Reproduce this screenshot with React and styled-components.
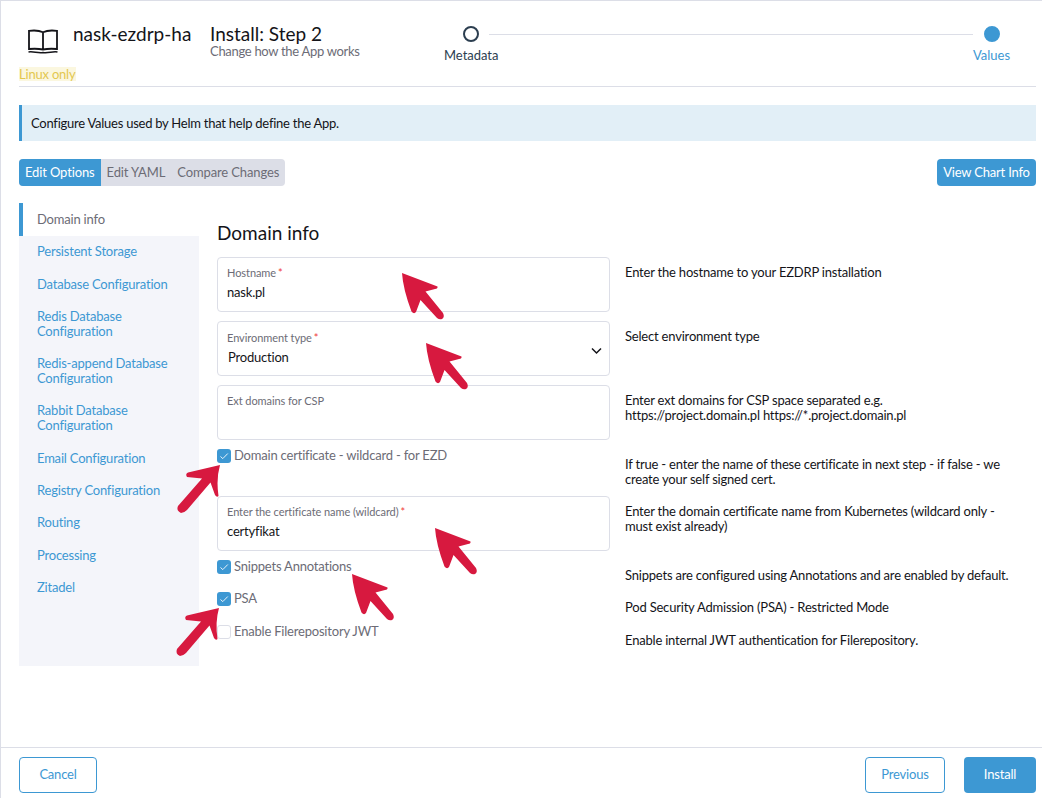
import React from 'react';
import styled, { createGlobalStyle } from 'styled-components';

const Global = createGlobalStyle`
  html, body { margin: 0; padding: 0; background: #fff; }
  body { font-family: Lato, "Open Sans", sans-serif; font-size: 13px; letter-spacing: -0.2px; line-height: 15px; color: #141419; }
  * { box-sizing: border-box; }
`;

const blue = '#3d98d3';
const line = '#dcdee7';
const muted = '#6c6c76';

const Page = styled.div`
  position: relative;
  width: 1042px;
  height: 798px;
  border-left: 1px solid ${line};
  border-top: 1px solid ${line};
  display: flex;
  flex-direction: column;
  overflow: hidden;
`;
const Main = styled.main`
  flex: 1;
  padding: 0 6px 0 18px;
  display: flex;
  flex-direction: column;
`;
const Header = styled.header`
  height: 86px;
  border-bottom: 1px solid ${line};
  display: flex;
  align-items: flex-start;
`;
const Brand = styled.div`
  width: 191px;
  display: flex;
  flex-direction: column;
`;
const BrandRow = styled.div`
  height: 66px;
  display: flex;
  align-items: flex-start;
  padding: 21px 0 0 8px;
  gap: 14px;
`;
const AppName = styled.div`
  font-size: 19px;
  letter-spacing: 0;
  line-height: 24px;
`;
const OsBadge = styled.span`
  align-self: flex-start;
  font-size: 13px;
  line-height: 14px;
  color: #e3c74f;
  background: #fbf7df;
`;
const TitleBlock = styled.div`
  width: 234px;
  padding-top: 21px;
`;
const Title = styled.div`
  font-size: 19px;
  letter-spacing: 0;
  line-height: 24px;
`;
const Subtitle = styled.div`
  font-size: 13px;
  letter-spacing: -0.3px;
  line-height: 14px;
  margin-top: -2px;
  color: ${muted};
`;
const Stepper = styled.div`
  flex: 1;
  margin-right: 26px;
  padding-top: 25px;
  display: flex;
  align-items: flex-start;
`;
const Step = styled.div`
  display: flex;
  flex-direction: column;
  align-items: center;
  gap: 6px;
  font-size: 13px;
  letter-spacing: -0.02px;
  line-height: 15px;
  color: ${p => (p.$active ? blue : '#2c3e50')};
`;
const Dot = styled.span`
  width: 16px;
  height: 16px;
  border-radius: 50%;
  border: 2px solid ${p => (p.$active ? blue : '#2c3e50')};
  background: ${p => (p.$active ? blue : '#fff')};
`;
const StepLine = styled.div`
  flex: 1;
  height: 1px;
  background: ${line};
  margin: 8px 0 0 -9px;
`;
const Banner = styled.div`
  margin-top: 18px;
  height: 36px;
  background: #e2eff7;
  border-left: 3px solid ${blue};
  padding-left: 9px;
  letter-spacing: -0.25px;
  display: flex;
  align-items: center;
`;
const Toolbar = styled.div`
  margin-top: 18px;
  display: flex;
  justify-content: space-between;
`;
const TabGroup = styled.div`
  display: flex;
  height: 27px;
  background: ${line};
  border-radius: 4px;
  overflow: hidden;
`;
const Tab = styled.div`
  padding: 0 6px 1px;
  letter-spacing: -0.13px;
  display: flex;
  align-items: center;
  color: ${p => (p.$active ? '#fff' : muted)};
  background: ${p => (p.$active ? blue : 'transparent')};
`;
const SolidButton = styled.div`
  height: ${p => p.$h || 27}px;
  width: ${p => p.$w}px;
  padding-bottom: 1px;
  background: ${blue};
  color: #fff;
  border-radius: 4px;
  display: flex;
  align-items: center;
  justify-content: center;
`;
const OutlineButton = styled.div`
  height: 36px;
  width: ${p => p.$w}px;
  padding-bottom: 1px;
  border: 1px solid ${blue};
  color: ${blue};
  border-radius: 4px;
  display: flex;
  align-items: center;
  justify-content: center;
`;
const Body = styled.div`
  margin-top: 17px;
  display: flex;
  gap: 18px;
`;
const Side = styled.nav`
  width: 180px;
  height: 463px;
  background: #f4f5fa;
`;
const SideItem = styled.div`
  padding: ${p => (p.$active ? '9px' : '8.3px')} 14px 9px ${p => (p.$active ? '14px' : '18px')};
  height: ${p => (p.$active ? '33px' : 'auto')};
  color: ${p => (p.$active ? muted : blue)};
  background: ${p => (p.$active ? '#fff' : 'transparent')};
  border-left: ${p => (p.$active ? `4px solid ${blue}` : 'none')};
`;
const Content = styled.section`
  flex: 1;
`;
const Heading = styled.h3`
  margin: 18px 0 12px;
  font-size: 19px;
  letter-spacing: 0;
  line-height: 24px;
  font-weight: 400;
`;
const Rows = styled.div`
  display: flex;
  flex-direction: column;
  gap: 9px;
`;
const Row = styled.div`
  display: grid;
  grid-template-columns: 393px 395px;
  column-gap: 15px;
  height: ${p => p.$h || 55}px;
`;
const Desc = styled.div`
  padding-top: 8px;
  color: #141419;
`;
const Field = styled.div`
  position: relative;
  height: 55px;
  border: 1px solid ${line};
  border-radius: 4px;
  padding: ${p => (p.$select ? '9px' : '8px')} 9px 0;
`;
const FieldLabel = styled.div`
  font-size: 11px;
  letter-spacing: -0.07px;
  line-height: 13px;
  color: ${muted};
`;
const Star = styled.span`
  color: #f03a3a;
  margin-left: 2px;
`;
const FieldValue = styled.div`
  margin-top: 5px;
  padding-left: ${p => (p.$select ? '1px' : '0')};
  line-height: 17px;
  color: #141419;
`;
const Chevron = styled.svg`
  position: absolute;
  right: 7px;
  top: 25px;
  width: 11px;
  height: 8px;
`;
const Check = styled.div`
  display: flex;
  align-items: flex-start;
  gap: 3px;
  color: ${muted};
  line-height: 12px;
`;
const Box = styled.span`
  width: 14px;
  height: 14px;
  flex: none;
  border-radius: 3px;
  background: ${p => (p.$on ? blue : '#fff')};
  border: ${p => (p.$on ? 'none' : `1px solid ${line}`)};
  display: flex;
  align-items: center;
  justify-content: center;
`;
const Footer = styled.footer`
  height: 51px;
  border-top: 1px solid ${line};
  padding: 9px 6px 0 18px;
  display: flex;
  justify-content: space-between;
`;
const FooterRight = styled.div`
  display: flex;
  gap: 19px;
`;
const Arrow = styled.svg`
  position: absolute;
  left: ${p => p.$x}px;
  top: ${p => p.$y}px;
  width: 60px;
  height: 60px;
  overflow: visible;
  pointer-events: none;
`;

const leftArrow = 'M0 0 L35.5 13.5 Q36 15.5 33 16 L23.5 18.5 L41 40 Q43 44 40 46 Q37.5 47 35 45 L18.5 27 L14 39 Q12 41.5 9.5 38.5 Q1 16 0 0 Z';
const rightArrow = 'M0 0 L-32 7.5 Q-35 9 -33 12 L-18 13.5 L-42 41 Q-44 46 -39 48 Q-36 48 -33 45 L-9.500 17.500 L-5 30 Q-3 33 -1.500 31 Q-4 14 0 0 Z';

const Pointer = ({ x, y, d = leftArrow }) => (
  <Arrow $x={x} $y={y} viewBox="0 0 60 60" aria-hidden="true">
    <path d={d} fill="#d7193f" />
  </Arrow>
);

const BookIcon = () => (
  <svg width="32" height="26" viewBox="0 0 32 26" fill="none" stroke="#141419" strokeWidth="1.800" style={{ marginTop: 7, flex: 'none' }}>
    <path d="M16 3.200 C12.500 1.500 7 1.200 2 1.800 V20 C7 19.600 12.500 19.800 16 20.500 C19.500 19.800 25 19.600 30 20 V1.800 C25 1.200 19.500 1.500 16 3.200 Z M16 3.200 V20.500" />
    <path d="M1.500 23 C6 22 11 24.500 16 23.500 C21 24.500 26 22 30.500 23" strokeWidth="1.400" />
  </svg>
);

const CheckMark = () => (
  <svg width="10" height="8" viewBox="0 0 10 8" fill="none" stroke="#eaf4fb" strokeWidth="1">
    <path d="M1.500 4.500 L3.800 6.600 L8.800 1.500" />
  </svg>
);

const CheckRow = ({ on, label, h, children }) => (
  <Row $h={h}>
    <Check>
      <Box $on={on}>{on && <CheckMark />}</Box>
      {label}
    </Check>
    <Desc>{children}</Desc>
  </Row>
);

const nav = [
  'Persistent Storage',
  'Database Configuration',
  'Redis Database Configuration',
  'Redis-append Database Configuration',
  'Rabbit Database Configuration',
  'Email Configuration',
  'Registry Configuration',
  'Routing',
  'Processing',
  'Zitadel',
];

export default function App() {
  return (
    <>
      <Global />
      <Page>
        <Main>
          <Header>
            <Brand>
              <BrandRow>
                <BookIcon />
                <AppName>nask-ezdrp-ha</AppName>
              </BrandRow>
              <OsBadge>Linux only</OsBadge>
            </Brand>
            <TitleBlock>
              <Title>Install: Step 2</Title>
              <Subtitle>Change how the App works</Subtitle>
            </TitleBlock>
            <Stepper>
              <Step>
                <Dot />
                Metadata
              </Step>
              <StepLine />
              <Step $active>
                <Dot $active />
                Values
              </Step>
            </Stepper>
          </Header>
          <Banner>Configure Values used by Helm that help define the App.</Banner>
          <Toolbar>
            <TabGroup>
              <Tab $active>Edit Options</Tab>
              <Tab>Edit YAML</Tab>
              <Tab>Compare Changes</Tab>
            </TabGroup>
            <SolidButton $w={99}>View Chart Info</SolidButton>
          </Toolbar>
          <Body>
            <Side>
              <SideItem $active>Domain info</SideItem>
              {nav.map(n => (
                <SideItem key={n}>{n}</SideItem>
              ))}
            </Side>
            <Content>
              <Heading>Domain info</Heading>
              <Rows>
                <Row>
                  <Field>
                    <FieldLabel>Hostname<Star>*</Star></FieldLabel>
                    <FieldValue>nask.pl</FieldValue>
                  </Field>
                  <Desc>Enter the hostname to your EZDRP installation</Desc>
                </Row>
                <Row>
                  <Field $select>
                    <FieldLabel>Environment type<Star>*</Star></FieldLabel>
                    <FieldValue $select>Production</FieldValue>
                    <Chevron viewBox="0 0 11 8" fill="none" stroke="#141419" strokeWidth="1.500">
                      <path d="M1 1.500 L5.500 6 L10 1.500" />
                    </Chevron>
                  </Field>
                  <Desc>Select environment type</Desc>
                </Row>
                <Row>
                  <Field>
                    <FieldLabel>Ext domains for CSP</FieldLabel>
                  </Field>
                  <Desc>
                    Enter ext domains for CSP space separated e.g.
                    <br />
                    https://project.domain.pl https://*.project.domain.pl
                  </Desc>
                </Row>
                <CheckRow on h={38} label="Domain certificate - wildcard - for EZD">
                  If true - enter the name of these certificate in next step - if false - we create your self signed cert.
                </CheckRow>
                <Row>
                  <Field>
                    <FieldLabel>Enter the certificate name (wildcard)<Star>*</Star></FieldLabel>
                    <FieldValue>certyfikat</FieldValue>
                  </Field>
                  <Desc>Enter the domain certificate name from Kubernetes (wildcard only - must exist already)</Desc>
                </Row>
                <CheckRow on h={23} label="Snippets Annotations">
                  Snippets are configured using Annotations and are enabled by default.
                </CheckRow>
                <CheckRow on h={24} label="PSA">
                  Pod Security Admission (PSA) - Restricted Mode
                </CheckRow>
                <CheckRow h={24} label="Enable Filerepository JWT">
                  Enable internal JWT authentication for Filerepository.
                </CheckRow>
              </Rows>
            </Content>
          </Body>
        </Main>
        <Footer>
          <OutlineButton $w={78}>Cancel</OutlineButton>
          <FooterRight>
            <OutlineButton $w={80}>Previous</OutlineButton>
            <SolidButton $w={72} $h={36}>Install</SolidButton>
          </FooterRight>
        </Footer>
        <Pointer x={401} y={272} />
        <Pointer x={425} y={342} />
        <Pointer x={434} y={527} />
        <Pointer x={351} y={573} />
        <Pointer x={219} y={464} d={rightArrow} />
        <Pointer x={218} y={607} d={rightArrow} />
      </Page>
    </>
  );
}
